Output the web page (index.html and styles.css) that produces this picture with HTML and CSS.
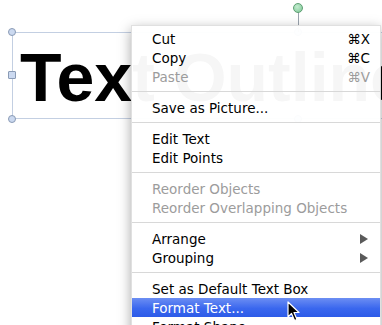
FILE: index.html
```html
<!DOCTYPE html>
<html lang="en">
<head>
    <meta charset="UTF-8">
    <title>Text Outline</title>
    <link rel="stylesheet" href="styles.css">
</head>
<body>
    <div class="slide">
        <div class="text-box">
            <div class="text-content">Text Outline</div>
            <span class="handle round top-left"></span>
            <span class="handle square mid-left"></span>
            <span class="handle round bottom-left"></span>
            <span class="handle round top-mid"></span>
            <span class="handle round bottom-mid"></span>
        </div>
        <div class="rotate-stem"></div>
        <span class="rotate-handle"></span>

        <ul class="menu">
            <li class="item">Cut<span class="key">⌘X</span></li>
            <li class="item">Copy<span class="key">⌘C</span></li>
            <li class="item disabled">Paste<span class="key">⌘V</span></li>
            <li class="sep"></li>
            <li class="item">Save as Picture...</li>
            <li class="sep"></li>
            <li class="item">Edit Text</li>
            <li class="item">Edit Points</li>
            <li class="sep"></li>
            <li class="item disabled">Reorder Objects</li>
            <li class="item disabled">Reorder Overlapping Objects</li>
            <li class="sep"></li>
            <li class="item">Arrange<span class="arrow"></span></li>
            <li class="item">Grouping<span class="arrow"></span></li>
            <li class="sep"></li>
            <li class="item">Set as Default Text Box</li>
            <li class="item active">Format Text...</li>
            <li class="item">Format Shape...</li>
        </ul>

        <svg class="cursor" width="14" height="22" viewBox="0 0 14 22">
            <path d="M1 1 L1 16 L4.5 12.5 L7.5 19.5 L10 18.5 L7 11.5 L12 11.5 Z" fill="#000" stroke="#fff" stroke-width="1.2" stroke-linejoin="round"/>
        </svg>
    </div>
</body>
</html>
```

FILE: styles.css
```css
html, body {
    margin: 0;
    padding: 0;
    background: #fff;
    overflow: hidden;
}
.slide {
    position: relative;
    width: 382px;
    height: 325px;
    overflow: hidden;
    background: #fff;
}
.text-box {
    position: absolute;
    left: 12px;
    top: 32px;
    width: 572px;
    height: 87px;
    border: 1px solid #c3cfe2;
    box-sizing: border-box;
}
.text-content {
    position: absolute;
    left: 7px;
    top: 10px;
    font-family: "Liberation Sans", Arial, sans-serif;
    font-weight: bold;
    font-size: 68px;
    line-height: 1;
    color: #000;
    white-space: nowrap;
}
.handle {
    position: absolute;
    width: 8px;
    height: 8px;
    box-sizing: border-box;
    background: #cbd9f0;
    border: 1px solid #8a9bb5;
}
.handle.round {border-radius: 50%;}
.handle.square {border-radius: 1px;}
.top-left {left: -5px; top: -5px;}
.mid-left {left: -5px; top: 38px;}
.bottom-left {left: -5px; top: 82px;}
.top-mid {left: 281px; top: -5px;}
.bottom-mid {left: 281px; top: 82px;}
.rotate-stem {
    position: absolute;
    left: 298px;
    top: 12px;
    width: 1px;
    height: 20px;
    background: #9aa3ad;
}
.rotate-handle {
    position: absolute;
    left: 293px;
    top: 3px;
    width: 10px;
    height: 10px;
    box-sizing: border-box;
    border-radius: 50%;
    background: radial-gradient(circle at 40% 35%, #c4ecd0, #7cc794);
    border: 1px solid #5e9f73;
}
.menu {
    position: absolute;
    left: 131px;
    top: 25px;
    width: 248px;
    margin: 0;
    padding: 3px 0 0;
    list-style: none;
    background: rgba(255, 255, 255, 0.965);
    border: 1px solid rgba(0, 0, 0, 0.12);
    border-bottom: none;
    box-shadow: 0 4px 12px rgba(0, 0, 0, 0.35);
    font-family: "DejaVu Sans", "Liberation Sans", sans-serif;
    font-size: 13.5px;
    color: #000;
}
.item {
    position: relative;
    display: flex;
    align-items: center;
    justify-content: space-between;
    height: 19px;
    padding: 0 10px 0 20px;
    white-space: nowrap;
}
.item.disabled {color: #9c9c9c;}
.item.active {
    background: linear-gradient(#6c8ef3, #3a67ee 55%, #2d5be8);
    color: #fff;
}
.sep {
    height: 1px;
    margin: 5px 0 6px;
    background: #d8d8d8;
}
.arrow {
    width: 0;
    height: 0;
    margin-right: 2px;
    border-top: 5px solid transparent;
    border-bottom: 5px solid transparent;
    border-left: 8px solid #5a5a5a;
}
.cursor {
    position: absolute;
    left: 287px;
    top: 301px;
}
```
